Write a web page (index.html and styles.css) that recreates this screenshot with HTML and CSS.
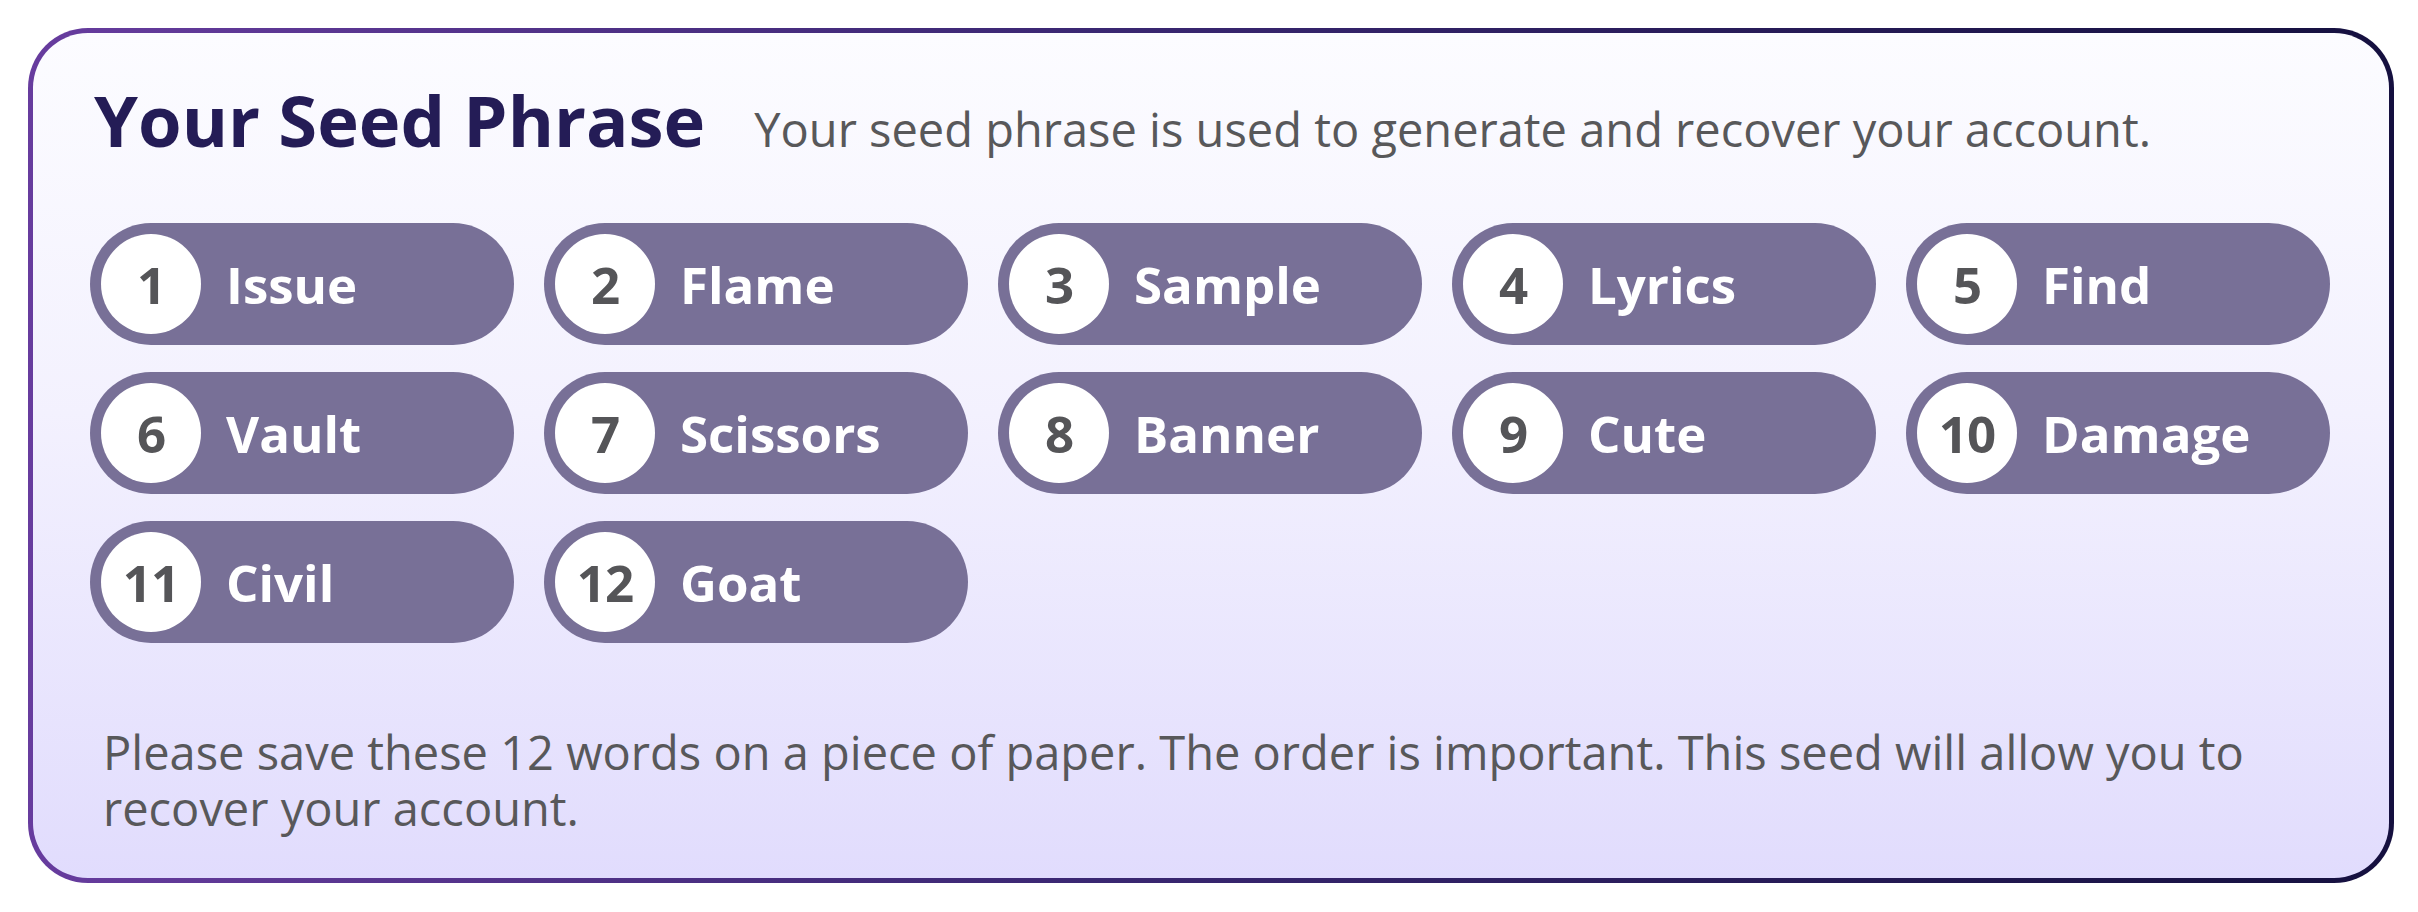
FILE: index.html
```html
<!DOCTYPE html>
<html lang="en">
<head>
<meta charset="utf-8">
<title>Your Seed Phrase</title>
<link rel="stylesheet" href="styles.css">
</head>
<body>
<section class="card">
  <header class="card-head">
    <h1 class="title">Your Seed Phrase</h1>
    <p class="subtitle">Your seed phrase is used to generate and recover your account.</p>
  </header>
  <ol class="words">
    <li class="word"><span class="num">1</span><span class="text">Issue</span></li>
    <li class="word"><span class="num">2</span><span class="text">Flame</span></li>
    <li class="word"><span class="num">3</span><span class="text">Sample</span></li>
    <li class="word"><span class="num">4</span><span class="text">Lyrics</span></li>
    <li class="word"><span class="num">5</span><span class="text">Find</span></li>
    <li class="word"><span class="num">6</span><span class="text">Vault</span></li>
    <li class="word"><span class="num">7</span><span class="text">Scissors</span></li>
    <li class="word"><span class="num">8</span><span class="text">Banner</span></li>
    <li class="word"><span class="num">9</span><span class="text">Cute</span></li>
    <li class="word"><span class="num">10</span><span class="text">Damage</span></li>
    <li class="word"><span class="num">11</span><span class="text">Civil</span></li>
    <li class="word"><span class="num">12</span><span class="text">Goat</span></li>
  </ol>
  <p class="note">Please save these 12 words on a piece of paper. The order is important. This seed will allow you to recover your account.</p>
</section>
</body>
</html>
```

FILE: styles.css
```css
* { box-sizing: border-box; }

html, body { background: #ffffff; }

body {
  margin: 0;
  padding: 28px 24px 0 28px;
  font-family: "Open Sans", "Noto Sans", "Liberation Sans", sans-serif;
}

.card {
  border: 5px solid transparent;
  border-radius: 60px;
  background:
    linear-gradient(to bottom, #fcfcff 0%, #f3f1fe 45%, #e1dcfd 100%) padding-box,
    linear-gradient(to right, #673c9e 0%, #3a2772 45%, #15103f 100%) border-box;
  padding: 51px 59px 42px 57px;
}

.card-head {
  display: flex;
  align-items: baseline;
  gap: 49px;
  padding-left: 4px;
}

.title {
  margin: 0;
  font-size: 70.5px;
  line-height: 72px;
  font-weight: 700;
  color: #241c56;
}

.subtitle {
  margin: 0;
  font-size: 47px;
  line-height: 48px;
  font-weight: 400;
  color: #58585a;
}

.words {
  list-style: none;
  margin: 67px 0 0 0;
  padding: 0;
  display: grid;
  grid-template-columns: repeat(5, 1fr);
  column-gap: 30px;
  row-gap: 27px;
}

.word {
  display: flex;
  align-items: center;
  height: 122px;
  padding: 11px;
  border-radius: 61px;
  background: #787097;
}

.num {
  flex: 0 0 100px;
  width: 100px;
  height: 100px;
  border-radius: 50%;
  background: #ffffff;
  display: flex;
  align-items: center;
  justify-content: center;
  font-size: 51px;
  line-height: 52px;
  font-weight: 700;
  color: #555558;
  letter-spacing: -1px;
}

.text {
  margin-left: 25px;
  font-size: 51px;
  line-height: 52px;
  font-weight: 700;
  color: #ffffff;
}

.note {
  margin: 81px 0 0 13px;
  font-size: 47px;
  line-height: 56px;
  font-weight: 400;
  color: #58585a;
}
```
